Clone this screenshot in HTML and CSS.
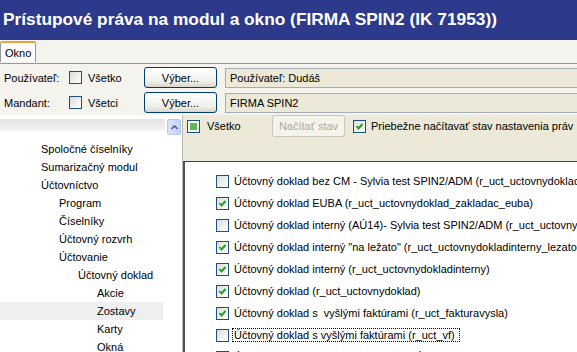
FILE: index.html
```html
<!DOCTYPE html>
<html lang="sk">
  <head>
    <meta charset="UTF-8" />
    <title>Prístupové práva na modul a okno</title>
    <link rel="stylesheet" href="styles.css">
  </head>
  <body>
    <div class="window">
      <div class="titlebar">Prístupové práva na modul a okno (FIRMA SPIN2 (IK 71953))</div>

      <div class="tabs">
        <div class="tab">Okno</div>
      </div>

      <div class="filters">
        <div class="filter-row">
          <span class="label">Používateľ:</span>
          <span class="check"></span>
          <span class="check-label">Všetko</span>
          <button class="btn">Výber...</button>
          <div class="field">Používateľ: Dudáš</div>
        </div>
        <div class="filter-row">
          <span class="label">Mandant:</span>
          <span class="check"></span>
          <span class="check-label">Všetci</span>
          <button class="btn">Výber...</button>
          <div class="field">FIRMA SPIN2</div>
        </div>
      </div>

      <div class="main">
        <div class="tree">
          <div class="tree-head">
            <span class="band"></span>
            <span class="scroll-up">
              <svg width="7" height="5" viewBox="0 0 7 5"><path d="M0.5 4 L3.5 1 L6.5 4" fill="none" stroke="#4d6185" stroke-width="1.6"/></svg>
            </span>
          </div>
          <ul class="tree-list">
            <li class="lvl1">Spoločné číselníky</li>
            <li class="lvl1">Sumarizačný modul</li>
            <li class="lvl1">Účtovníctvo</li>
            <li class="lvl2">Program</li>
            <li class="lvl2">Číselníky</li>
            <li class="lvl2">Účtovný rozvrh</li>
            <li class="lvl2">Účtovanie</li>
            <li class="lvl3">Účtovný doklad</li>
            <li class="lvl4">Akcie</li>
            <li class="lvl4 selected">Zostavy</li>
            <li class="lvl4">Karty</li>
            <li class="lvl4">Okná</li>
          </ul>
        </div>

        <div class="rights">
          <div class="toolbar">
            <span class="check partial"></span>
            <span class="all-label">Všetko</span>
            <button class="btn disabled">Načítať stav</button>
            <span class="check">
              <svg width="11" height="11" viewBox="0 0 11 11"><path d="M2.5 5 L4.5 7.5 L8.5 3" fill="none" stroke="#21a121" stroke-width="2"/></svg>
            </span>
            <span class="live-label">Priebežne načítavať stav nastavenia práv</span>
          </div>

          <div class="list">
            <div class="item">
              <span class="check"></span>
              <span class="text">Účtovný doklad bez CM - Sylvia test SPIN2/ADM (r_uct_uctovnydoklad_bezcm)</span>
            </div>
            <div class="item">
              <span class="check"><svg width="11" height="11" viewBox="0 0 11 11"><path d="M2.5 5 L4.5 7.5 L8.5 3" fill="none" stroke="#21a121" stroke-width="2"/></svg></span>
              <span class="text">Účtovný doklad EUBA (r_uct_uctovnydoklad_zakladac_euba)</span>
            </div>
            <div class="item">
              <span class="check"></span>
              <span class="text">Účtovný doklad interný (AÚ14)- Sylvia test SPIN2/ADM (r_uct_uctovnydokladinterny)</span>
            </div>
            <div class="item">
              <span class="check"><svg width="11" height="11" viewBox="0 0 11 11"><path d="M2.5 5 L4.5 7.5 L8.5 3" fill="none" stroke="#21a121" stroke-width="2"/></svg></span>
              <span class="text">Účtovný doklad interný "na ležato" (r_uct_uctovnydokladinterny_lezato)</span>
            </div>
            <div class="item">
              <span class="check"><svg width="11" height="11" viewBox="0 0 11 11"><path d="M2.5 5 L4.5 7.5 L8.5 3" fill="none" stroke="#21a121" stroke-width="2"/></svg></span>
              <span class="text">Účtovný doklad interný (r_uct_uctovnydokladinterny)</span>
            </div>
            <div class="item">
              <span class="check"><svg width="11" height="11" viewBox="0 0 11 11"><path d="M2.5 5 L4.5 7.5 L8.5 3" fill="none" stroke="#21a121" stroke-width="2"/></svg></span>
              <span class="text">Účtovný doklad (r_uct_uctovnydoklad)</span>
            </div>
            <div class="item">
              <span class="check"><svg width="11" height="11" viewBox="0 0 11 11"><path d="M2.5 5 L4.5 7.5 L8.5 3" fill="none" stroke="#21a121" stroke-width="2"/></svg></span>
              <span class="text">Účtovný doklad s&nbsp; vyšlými faktúrami (r_uct_fakturavysla)</span>
            </div>
            <div class="item">
              <span class="check"></span>
              <span class="text focused">Účtovný doklad s vyšlými faktúrami (r_uct_vf)</span>
            </div>
            <div class="item">
              <span class="check"></span>
              <span class="text">Účtovný doklad s vyšlými faktúrami EÚ (r_uct_fakturavysla_eu)</span>
            </div>
          </div>
        </div>
      </div>
    </div>
  </body>
</html>
```

FILE: styles.css
```css
body {
  margin: 0;
  font-family: "Liberation Sans", Arial, sans-serif;
  font-size: 11px;
  color: #000;
}
.window {
  width: 577px;
  height: 352px;
  overflow: hidden;
  background: #f4f3ee;
}
.titlebar {
  height: 40px;
  line-height: 38px;
  padding-left: 3px;
  background: #2d3a8c;
  color: #fff;
  font-weight: bold;
  font-size: 17.3px;
  white-space: nowrap;
}
.tabs {
  height: 22px;
  padding-top: 1px;
  border-bottom: 1px solid #919b9c;
  display: flex;
}
.tab {
  width: 30px;
  height: 19px;
  padding-left: 4px;
  line-height: 20px;
  background: #fcfcfe;
  border: 1px solid #919b9c;
  border-top: 2px solid #e9a43b;
  border-bottom: none;
  border-radius: 2px 2px 0 0;
  margin-bottom: -1px;
}
.filters {
  padding-top: 1px;
}
.filter-row {
  height: 25px;
  display: flex;
  align-items: center;
}
.label {
  width: 65px;
  padding-left: 4px;
}
.check {
  width: 11px;
  height: 11px;
  border: 1px solid #1c5180;
  background: linear-gradient(135deg, #dcdcd7, #f5f5f2 70%, #fff);
  display: inline-flex;
  flex-shrink: 0;
}
.check-label {
  width: 56px;
  padding-left: 6px;
}
.btn {
  font-family: inherit;
  font-size: 11px;
  width: 73px;
  height: 21px;
  padding: 0;
  border: 1px solid #003c74;
  border-radius: 3px;
  background: linear-gradient(#ffffff, #f0f0ea 70%, #d8d4c8);
  color: #000;
}
.field {
  flex: 1;
  height: 18px;
  line-height: 18px;
  margin-left: 8px;
  margin-right: -40px;
  padding-left: 4px;
  background: #ece9d8;
  border: 1px solid #a5acb5;
  white-space: nowrap;
}
.main {
  display: flex;
  height: 239px;
}
.tree {
  width: 182px;
  background: #fff;
  border-right: 1px solid #b8b8b8;
  flex-shrink: 0;
}
.tree-head {
  display: flex;
  padding-top: 4px;
  height: 17px;
}
.band {
  width: 165px;
  height: 12px;
  background: linear-gradient(#e4e4e4, #f4f4f4);
}
.scroll-up {
  width: 12px;
  height: 14px;
  margin-left: 2px;
  border: 1px solid #b7c7e8;
  border-radius: 2px;
  background: linear-gradient(90deg, #d7e3fb, #c1d3fb);
  display: flex;
  align-items: center;
  justify-content: center;
}
.tree-list {
  list-style: none;
  margin: 0;
  padding: 4px 0 0;
}
.tree-list li {
  height: 18px;
  line-height: 18px;
  width: 163px;
  box-sizing: border-box;
  white-space: nowrap;
}
.lvl1 { padding-left: 41px; }
.lvl2 { padding-left: 59px; }
.lvl3 { padding-left: 78px; }
.lvl4 { padding-left: 97px; }
.selected {
  background: #efefef;
}
.rights {
  flex: 1;
  min-width: 0;
  background: #ece9d8;
  display: flex;
  flex-direction: column;
}
.toolbar {
  height: 46px;
  flex-shrink: 0;
  display: flex;
  align-items: flex-start;
  padding-left: 4px;
}
.toolbar > * {
  margin-top: 4px;
}
.toolbar .check {
  margin-top: 5px;
}
.check.partial {
  background: #f6f6f3;
  align-items: center;
  justify-content: center;
}
.check.partial::after {
  content: "";
  width: 7px;
  height: 7px;
  margin: 2px;
  background: #5cb85c;
}
.all-label {
  width: 65px;
  padding-left: 7px;
  line-height: 21px;
  margin-top: 1px;
}
.btn.disabled {
  border-color: #c9c7ba;
  background: #f5f4ea;
  color: #aca899;
  margin-top: 0;
  height: 22px;
}
.toolbar .btn + .check {
  margin-left: 8px;
}
.live-label {
  padding-left: 5px;
  line-height: 21px;
  margin-top: 1px;
  white-space: nowrap;
}
.list {
  flex: 1;
  min-height: 0;
  overflow: hidden;
  background: #fff;
  border-top: 1px solid #404040;
  border-left: 2px solid #505050;
  padding: 8px 0 0 31px;
}
.item {
  height: 22px;
  display: flex;
  align-items: center;
  white-space: nowrap;
}
.item .text {
  padding-left: 5px;
}
.item .text.focused {
  outline: 1px dotted #000;
  margin-left: 4px;
  padding-left: 1px;
  padding-right: 4px;
}
```
